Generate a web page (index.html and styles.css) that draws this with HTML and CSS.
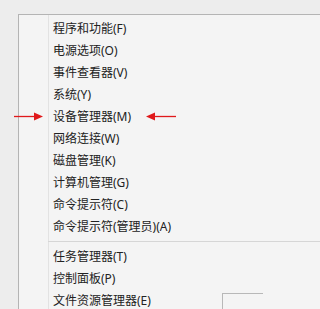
FILE: index.html
```html
<!DOCTYPE html>
<html lang="zh-CN">
<head>
<meta charset="utf-8">
<link rel="stylesheet" href="styles.css">
</head>
<body>
<div class="menu">
  <div class="item">程序和功能(F)</div>
  <div class="item">电源选项(O)</div>
  <div class="item">事件查看器(V)</div>
  <div class="item">系统(Y)</div>
  <div class="item">设备管理器(M)</div>
  <div class="item">网络连接(W)</div>
  <div class="item">磁盘管理(K)</div>
  <div class="item">计算机管理(G)</div>
  <div class="item">命令提示符(C)</div>
  <div class="item">命令提示符(管理员)(A)</div>
  <div class="sep"></div>
  <div class="item">任务管理器(T)</div>
  <div class="item">控制面板(P)</div>
  <div class="item">文件资源管理器(E)</div>
</div>
<svg class="arrow arrow-left" width="30" height="9" viewBox="0 0 30 9">
  <line x1="0" y1="4.5" x2="22" y2="4.5" stroke="#e0191b" stroke-width="1.3"/>
  <polygon points="20,0.5 29,4.5 20,8.5" fill="#e0191b"/>
</svg>
<svg class="arrow arrow-right" width="32" height="9" viewBox="0 0 32 9">
  <line x1="8" y1="4.5" x2="31" y2="4.5" stroke="#e0191b" stroke-width="1.3"/>
  <polygon points="10,0.5 1,4.5 10,8.5" fill="#e0191b"/>
</svg>
<div class="corner-box"></div>
</body>
</html>
```
FILE: styles.css
```css
html, body {
  margin: 0;
  padding: 0;
  background: #ededed;
  overflow: hidden;
}
body {
  height: 309px;
  position: relative;
  font-family: "Noto Sans", "Noto Sans CJK SC", sans-serif;
  font-size: 12px;
  color: #222;
}
.menu {
  margin: 14px 0 0 18px;
  height: 295px;
  overflow: hidden;
  box-sizing: border-box;
  border: 1px solid #b4b4b4;
  border-right: none;
  border-bottom: none;
  padding-top: 3px;
  background: #f4f4f4 linear-gradient(#e2e2e2, #e2e2e2) no-repeat 29px 0 / 1px 100%;
}
.item {
  height: 22px;
  line-height: 22px;
  padding-left: 34px;
  white-space: nowrap;
}
.sep {
  height: 8px;
  box-sizing: border-box;
  padding-top: 3px;
  margin-left: 29px;
}
.sep::before {
  content: "";
  display: block;
  height: 1px;
  background: #d6d6d6;
}
.arrow {
  position: absolute;
  top: 112px;
}
.arrow-left { left: 14px; }
.arrow-right { left: 145px; }
.corner-box {
  position: absolute;
  left: 222px;
  top: 293px;
  width: 40px;
  height: 20px;
  border: 1px solid #b8b8b8;
  border-right: none;
  border-bottom: none;
  background: #f4f4f4;
}
```
